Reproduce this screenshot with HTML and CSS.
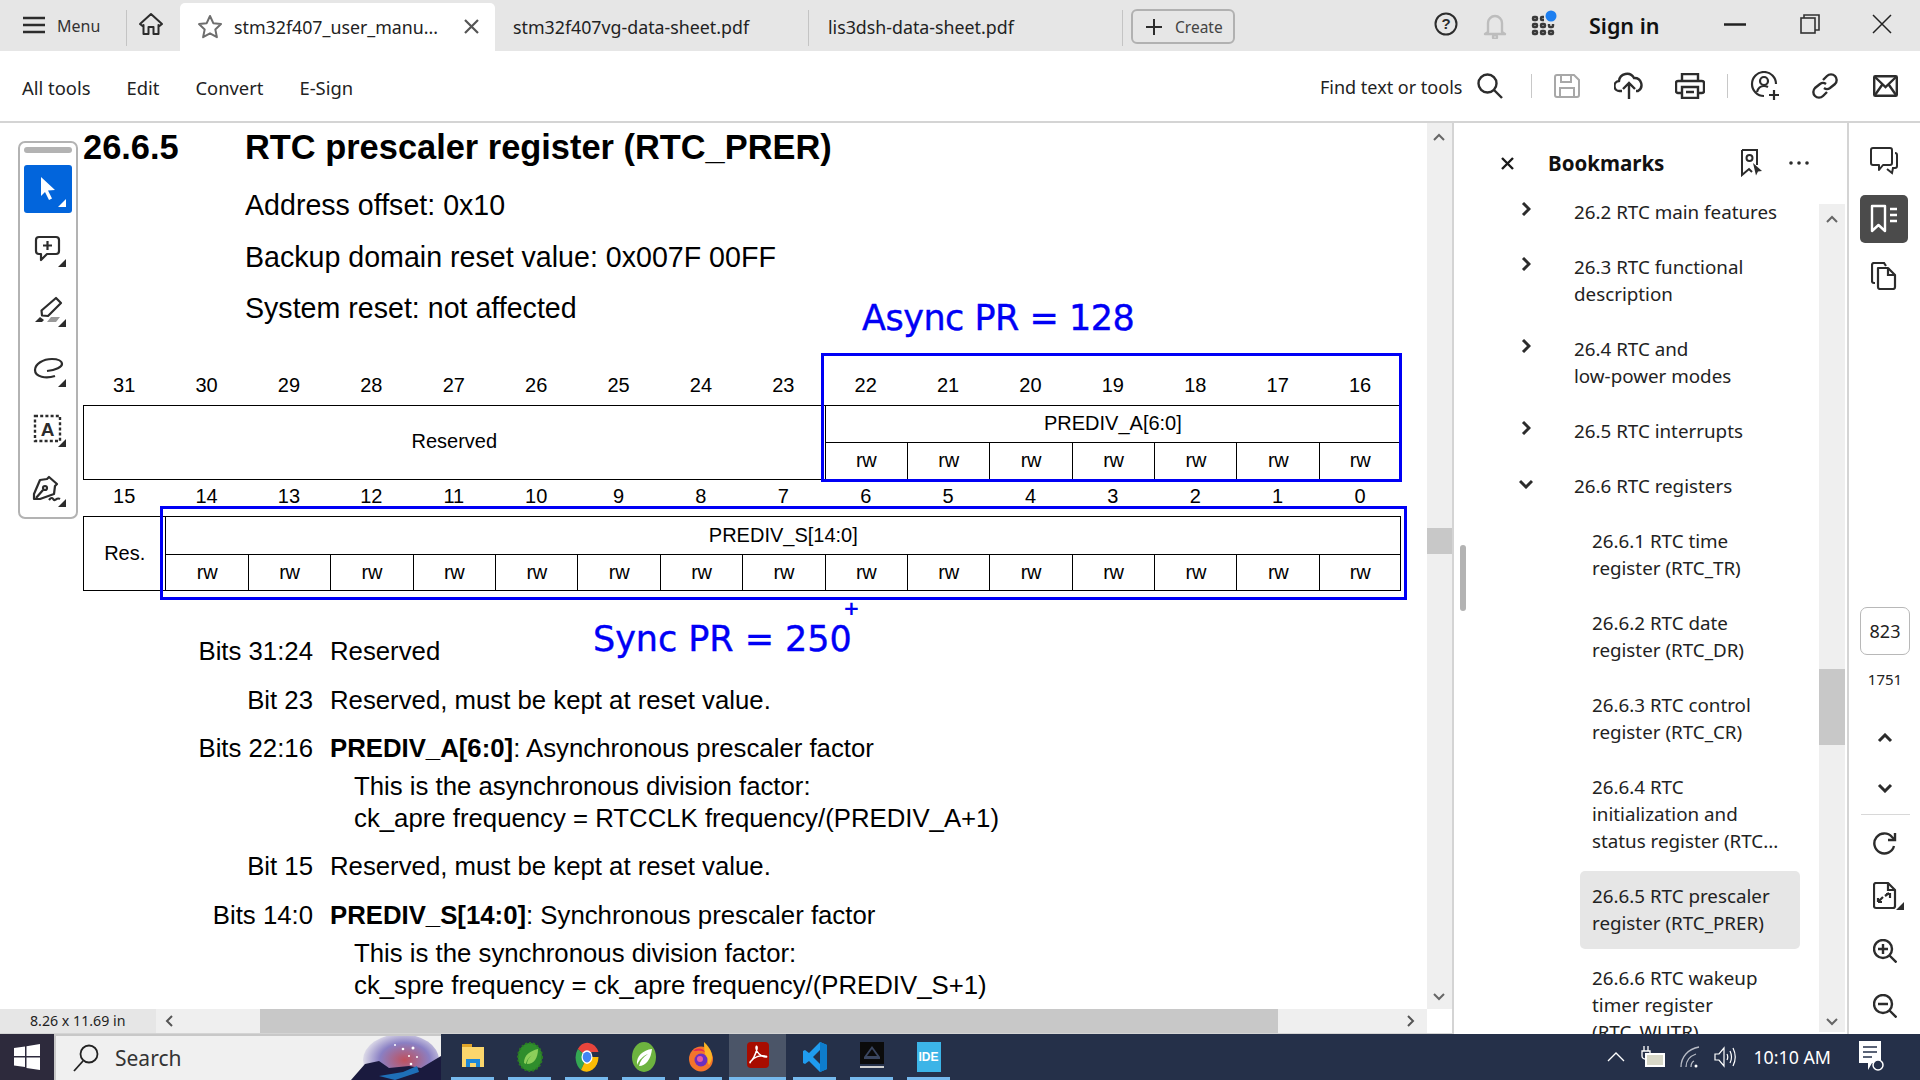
FILE: index.html
```html
<!DOCTYPE html>
<html lang="en">
<head>
<meta charset="utf-8">
<title>stm32f407_user_manual.pdf</title>
<link rel="stylesheet" href="styles.css">
</head>
<body>
<header class="tabbar">
  <div class="menu-btn">
    <svg class="ico" width="22" height="20" viewBox="0 0 22 20"><path d="M0 3h22M0 10h22M0 17h22" stroke="#2c2c2c" stroke-width="2.4"/></svg>
    <span>Menu</span>
  </div>
  <div class="home-btn">
    <svg width="26" height="26" viewBox="0 0 26 26" fill="none" stroke="#2c2c2c" stroke-width="2"><path d="M2 13L13 3l11 10-2.5 2-1-1v9h-5v-7h-5v7h-5v-9l-1 1z" stroke-linejoin="round"/></svg>
  </div>
  <div class="tab tab-active">
    <svg width="26" height="26" viewBox="0 0 26 26" fill="none" stroke="#6e6e6e" stroke-width="2"><path d="M13 2l3.3 7.2 7.7.9-5.7 5.3 1.6 7.8-6.9-3.9-6.9 3.9 1.6-7.8L2 10.100l7.700-.9z" stroke-linejoin="round"/></svg>
    <span class="tab-name">stm32f407_user_manu...</span>
    <svg class="tab-x" width="15" height="15" viewBox="0 0 15 15"><path d="M1 1l13 13M14 1L1 14" stroke="#555" stroke-width="2.200"/></svg>
  </div>
  <div class="tab tab-second">stm32f407vg-data-sheet.pdf</div>
  <div class="tab tab-third">lis3dsh-data-sheet.pdf</div>
  <div class="create-wrap">
    <div class="create-btn">
      <svg width="16" height="16" viewBox="0 0 16 16"><path d="M8 0v16M0 8h16" stroke="#2c2c2c" stroke-width="2"/></svg>
      <span>Create</span>
    </div>
  </div>
  <div class="top-right">
    <svg width="24" height="24" viewBox="0 0 24 24" fill="none" stroke="#2c2c2c" stroke-width="2"><circle cx="12" cy="12" r="10.500"/><text x="12" y="17" text-anchor="middle" class="q-mark">?</text></svg>
    <svg class="bell" width="24" height="26" viewBox="0 0 24 26" fill="none" stroke="#bdbdbd" stroke-width="2.400"><path d="M5 19V10a7 7 0 0 1 14 0v9l3 2H2z" stroke-linejoin="round"/><circle cx="12" cy="24" r="2"/></svg>
    <svg class="apps" width="27" height="26" viewBox="0 0 27 26"><g fill="none" stroke="#3a3a3a" stroke-width="2.400"><rect x="2" y="7" width="4" height="3" rx="1"/><path d="M13 7h-2a1 1 0 0 0-1 1v1a1 1 0 0 0 1 1h2"/><rect x="2" y="14" width="4" height="3" rx="1"/><rect x="10" y="14" width="4" height="3" rx="1"/><path d="M18 14v2a1 1 0 0 0 1 1h2a1 1 0 0 0 1-1v-2"/><rect x="2" y="21" width="4" height="3" rx="1"/><rect x="10" y="21" width="4" height="3" rx="1"/><rect x="18" y="21" width="4" height="3" rx="1"/></g><circle cx="20" cy="6" r="5.500" fill="#1e7ff0"/></svg>
    <span class="sign-in">Sign in</span>
    <svg class="win-min" width="22" height="3" viewBox="0 0 22 3"><path d="M0 1.500h22" stroke="#222" stroke-width="2.500"/></svg>
    <svg class="win-max" width="20" height="20" viewBox="0 0 20 20" fill="none" stroke="#333" stroke-width="1.600"><rect x="1" y="4" width="14" height="15"/><path d="M4 4V1h15v15h-4"/></svg>
    <svg class="win-close" width="20" height="20" viewBox="0 0 20 20"><path d="M1 1l18 18M19 1L1 19" stroke="#222" stroke-width="1.500"/></svg>
  </div>
</header>

<nav class="toolbar">
  <div class="tool-links"><span>All tools</span><span>Edit</span><span>Convert</span><span>E-Sign</span></div>
  <div class="tool-actions">
    <span class="find">Find text or tools</span>
    <svg class="a-search" width="26" height="26" viewBox="0 0 26 26" fill="none" stroke="#2c2c2c" stroke-width="2.400"><circle cx="10.500" cy="10.500" r="9"/><path d="M17 17l8 8"/></svg>
    <i class="vsep a-sep1"></i>
    <svg class="a-save" width="26" height="24" viewBox="0 0 26 24" fill="none" stroke="#a8a8a8" stroke-width="2"><path d="M3 1h17l5 5v15a2 2 0 0 1-2 2H3a2 2 0 0 1-2-2V3a2 2 0 0 1 2-2z"/><path d="M7 1v7h10V1M6 23v-9h14v9"/></svg>
    <svg class="a-cloud" width="30" height="28" viewBox="0 0 30 28" fill="none" stroke="#2c2c2c" stroke-width="2.400"><path d="M8 19H6a5 5 0 0 1-1-10 8 8 0 0 1 15-3 7 7 0 0 1 4 13h-2"/><path d="M15 27V11M9 17l6-6 6 6"/></svg>
    <svg class="a-print" width="30" height="26" viewBox="0 0 30 26" fill="none" stroke="#2c2c2c" stroke-width="2.400"><path d="M7 8V1h16v7M7 20H3a2 2 0 0 1-2-2v-8a2 2 0 0 1 2-2h24a2 2 0 0 1 2 2v8a2 2 0 0 1-2 2h-4"/><path d="M7 14h16v11H7zM11 19h8"/></svg>
    <i class="vsep a-sep2"></i>
    <svg class="a-share" width="30" height="30" viewBox="0 0 30 30" fill="none" stroke="#2c2c2c" stroke-width="2.200"><path d="M14 25A12 12 0 1 1 26 13M24 19v10M19 24h10"/><circle cx="14" cy="10" r="4"/><path d="M7 21c1-4 4-6 7-6 2 0 3 .5 4 1"/></svg>
    <svg class="a-link" width="26" height="26" viewBox="0 0 26 26" fill="none" stroke="#2c2c2c" stroke-width="2.400"><path d="M11 7l4-4a5 5 0 0 1 8 8l-5 4a5 5 0 0 1-6 0"/><path d="M15 19l-4 4a5 5 0 0 1-8-8l5-4a5 5 0 0 1 6 0"/></svg>
    <svg class="a-mail" width="25" height="22" viewBox="0 0 25 22" fill="none" stroke="#2c2c2c" stroke-width="2.400"><rect x="1.200" y="1.200" width="22.600" height="19.600" rx="1"/><path d="M2 2l10.500 10L23 2M2 20l7-10M23 20l-7-10"/></svg>
  </div>
</nav>

<main class="workspace">
  <section class="viewer">
    <div class="doc-area">
      <article class="page">
        <h1 class="title"><span class="title-no">26.6.5</span><span>RTC prescaler register (RTC_PRER)</span></h1>
        <div class="meta">
          <p>Address offset: 0x10</p>
          <p>Backup domain reset value: 0x007F 00FF</p>
          <p>System reset: not affected</p>
        </div>

        <div class="reg">
          <div class="no">31</div><div class="no">30</div><div class="no">29</div><div class="no">28</div><div class="no">27</div><div class="no">26</div><div class="no">25</div><div class="no">24</div><div class="no">23</div><div class="no">22</div><div class="no">21</div><div class="no">20</div><div class="no">19</div><div class="no">18</div><div class="no">17</div><div class="no">16</div>
          <div class="cell res-wide">Reserved</div>
          <div class="cell span7 end">PREDIV_A[6:0]</div>
          <div class="cell low">rw</div><div class="cell low">rw</div><div class="cell low">rw</div><div class="cell low">rw</div><div class="cell low">rw</div><div class="cell low">rw</div><div class="cell low end">rw</div>
          <div class="no">15</div><div class="no">14</div><div class="no">13</div><div class="no">12</div><div class="no">11</div><div class="no">10</div><div class="no">9</div><div class="no">8</div><div class="no">7</div><div class="no">6</div><div class="no">5</div><div class="no">4</div><div class="no">3</div><div class="no">2</div><div class="no">1</div><div class="no">0</div>
          <div class="cell res-one">Res.</div>
          <div class="cell span15 end">PREDIV_S[14:0]</div>
          <div class="cell low">rw</div><div class="cell low">rw</div><div class="cell low">rw</div><div class="cell low">rw</div><div class="cell low">rw</div><div class="cell low">rw</div><div class="cell low">rw</div><div class="cell low">rw</div><div class="cell low">rw</div><div class="cell low">rw</div><div class="cell low">rw</div><div class="cell low">rw</div><div class="cell low">rw</div><div class="cell low">rw</div><div class="cell low end">rw</div>
        </div>

        <div class="bits">
          <div class="bit b1"><span class="lab">Bits 31:24</span><span>Reserved</span></div>
          <div class="bit b2"><span class="lab">Bit 23</span><span>Reserved, must be kept at reset value.</span></div>
          <div class="bit b3"><span class="lab">Bits 22:16</span><span><b>PREDIV_A[6:0]</b>: Asynchronous prescaler factor</span></div>
          <p class="sub">This is the asynchronous division factor:<br>ck_apre frequency = RTCCLK frequency/(PREDIV_A+1)</p>
          <div class="bit b3"><span class="lab">Bit 15</span><span>Reserved, must be kept at reset value.</span></div>
          <div class="bit b2"><span class="lab">Bits 14:0</span><span><b>PREDIV_S[14:0]</b>: Synchronous prescaler factor</span></div>
          <p class="sub">This is the synchronous division factor:<br>ck_spre frequency = ck_apre frequency/(PREDIV_S+1)</p>
        </div>

        <div class="mark mark-a"></div>
        <div class="mark mark-s"></div>
        <div class="note note-a">Async PR = 128</div>
        <div class="note note-s">Sync PR = 250</div>
        <div class="note-plus">+</div>

        <aside class="quick">
          <i class="grip"></i>
          <div class="q-cell q-on"><svg width="48" height="48" viewBox="0 0 48 48"><path d="M17 12l14 13-7 .5 4 8-3 1.500-4-8-4 4z" fill="#fff"/><path d="M42 34v8h-8z" fill="#fff"/></svg></div>
          <div class="q-cell"><svg width="48" height="48" viewBox="0 0 48 48" fill="none" stroke="#2c2c2c" stroke-width="2.200"><path d="M15 12h17a3 3 0 0 1 3 3v11a3 3 0 0 1-3 3h-9l-6 6v-6h-2a3 3 0 0 1-3-3V15a3 3 0 0 1 3-3z" stroke-linejoin="round"/><path d="M23.500 16v9M19 20.500h9"/><path d="M42 34v8h-8z" fill="#2c2c2c" stroke="none"/></svg></div>
          <div class="q-cell"><svg width="48" height="48" viewBox="0 0 48 48" fill="none" stroke="#2c2c2c" stroke-width="2.200"><path d="M32 13l5 5-13 13-6-.5-.5-5z" stroke-linejoin="round"/><path d="M11 37l5-5 4 3-2 2z" fill="#2c2c2c" stroke="none"/><path d="M23 37l4-5h9l-4 5z" fill="#999" stroke="none"/><path d="M42 34v8h-8z" fill="#2c2c2c" stroke="none"/></svg></div>
          <div class="q-cell"><svg width="48" height="48" viewBox="0 0 48 48" fill="none" stroke="#2c2c2c" stroke-width="2.200"><path d="M31 31c-9 3-20 1-20-6 0-6 8-11 17-11 6 0 10 2 10 5s-6 6-15 7"/><path d="M42 34v8h-8z" fill="#2c2c2c" stroke="none"/></svg></div>
          <div class="q-cell"><svg width="48" height="48" viewBox="0 0 48 48" fill="none" stroke="#2c2c2c"><rect x="11" y="11" width="25" height="25" stroke-width="2.400" stroke-dasharray="3 2.200"/><text x="23.500" y="31" text-anchor="middle" class="q-a">A</text><path d="M42 34v8h-8z" fill="#2c2c2c" stroke="none"/></svg></div>
          <div class="q-cell"><svg width="48" height="48" viewBox="0 0 48 48" fill="none" stroke="#2c2c2c" stroke-width="2.200"><path d="M25 12l8 7-2 2-1 8-14 5-6 0 0-5 6-14 7-1z" stroke-linejoin="round"/><path d="M12 33l7-8"/><circle cx="21" cy="23" r="2"/><path d="M25 35c3-4 4-1 5 0s3-3 6-1"/><path d="M42 34v8h-8z" fill="#2c2c2c" stroke="none"/></svg></div>
        </aside>
      </article>
      <div class="vscroll">
        <svg class="arr" width="14" height="10" viewBox="0 0 14 10" fill="none" stroke="#666" stroke-width="2"><path d="M2 8l5-5 5 5"/></svg>
        <i class="thumb-v"></i>
        <svg class="arr arr-down" width="14" height="10" viewBox="0 0 14 10" fill="none" stroke="#666" stroke-width="2"><path d="M2 2l5 5 5-5"/></svg>
      </div>
    </div>
    <div class="hbar">
      <span class="size">8.26 x 11.69 in</span>
      <div class="htrack">
        <svg class="h-left" width="10" height="14" viewBox="0 0 10 14" fill="none" stroke="#555" stroke-width="2"><path d="M8 2L3 7l5 5"/></svg>
        <i class="thumb-h"></i>
        <svg class="h-right" width="10" height="14" viewBox="0 0 10 14" fill="none" stroke="#555" stroke-width="2"><path d="M2 2l5 5-5 5"/></svg>
      </div>
    </div>
  </section>

  <section class="bookmarks">
    <i class="splitter"></i>
    <div class="bm-head">
      <svg class="bm-x" width="13" height="13" viewBox="0 0 13 13"><path d="M1 1l11 11M12 1L1 12" stroke="#1a1a1a" stroke-width="2.400"/></svg>
      <span class="bm-title">Bookmarks</span>
      <svg class="bm-add" width="24" height="28" viewBox="0 0 24 28" fill="none" stroke="#2c2c2c" stroke-width="2"><path d="M3 1h15v15M3 1v25l7-6 3 3"/><circle cx="10.500" cy="9" r="3"/><path d="M14 14l9 8-4 .5-2 4z" fill="#2c2c2c" stroke="none"/></svg>
      <svg class="bm-more" width="20" height="4" viewBox="0 0 20 4" fill="#2c2c2c"><circle cx="2" cy="2" r="1.800"/><circle cx="10" cy="2" r="1.800"/><circle cx="18" cy="2" r="1.800"/></svg>
    </div>
    <div class="bm-body">
      <ul class="bm-list">
        <li class="bm-row"><svg class="chev" width="10" height="14" viewBox="0 0 10 14" fill="none" stroke="#2c2c2c" stroke-width="3"><path d="M2 1l6 6-6 6"/></svg><span>26.2 RTC main features</span></li>
        <li class="bm-row"><svg class="chev" width="10" height="14" viewBox="0 0 10 14" fill="none" stroke="#2c2c2c" stroke-width="3"><path d="M2 1l6 6-6 6"/></svg><span>26.3 RTC functional<br>description</span></li>
        <li class="bm-row"><svg class="chev" width="10" height="14" viewBox="0 0 10 14" fill="none" stroke="#2c2c2c" stroke-width="3"><path d="M2 1l6 6-6 6"/></svg><span>26.4 RTC and<br>low-power modes</span></li>
        <li class="bm-row"><svg class="chev" width="10" height="14" viewBox="0 0 10 14" fill="none" stroke="#2c2c2c" stroke-width="3"><path d="M2 1l6 6-6 6"/></svg><span>26.5 RTC interrupts</span></li>
        <li class="bm-row"><svg class="chev chev-open" width="14" height="10" viewBox="0 0 14 10" fill="none" stroke="#2c2c2c" stroke-width="3"><path d="M1 2l6 6 6-6"/></svg><span>26.6 RTC registers</span></li>
        <li class="bm-sub">26.6.1 RTC time<br>register (RTC_TR)</li>
        <li class="bm-sub">26.6.2 RTC date<br>register (RTC_DR)</li>
        <li class="bm-sub">26.6.3 RTC control<br>register (RTC_CR)</li>
        <li class="bm-sub">26.6.4 RTC<br>initialization and<br>status register (RTC...</li>
        <li class="bm-sub bm-sel">26.6.5 RTC prescaler<br>register (RTC_PRER)</li>
        <li class="bm-sub">26.6.6 RTC wakeup<br>timer register<br>(RTC_WUTR)</li>
      </ul>
      <div class="bm-scroll">
        <svg class="arr" width="14" height="10" viewBox="0 0 14 10" fill="none" stroke="#666" stroke-width="2"><path d="M2 8l5-5 5 5"/></svg>
        <i class="thumb-b"></i>
        <svg class="arr arr-down" width="14" height="10" viewBox="0 0 14 10" fill="none" stroke="#666" stroke-width="2"><path d="M2 2l5 5 5-5"/></svg>
      </div>
    </div>
  </section>

  <aside class="rail">
    <svg class="r-comment" width="28" height="28" viewBox="0 0 28 28" fill="none" stroke="#2c2c2c" stroke-width="2"><path d="M3 1h17a2 2 0 0 1 2 2v13a2 2 0 0 1-2 2h-7l-4 5v-5H3a2 2 0 0 1-2-2V3a2 2 0 0 1 2-2z" stroke-linejoin="round"/><path d="M25 6c1 0 2 1 2 2v11c0 1-1 2-2 2h-2l-1 5-5-4"/></svg>
    <div class="r-active"><svg width="30" height="30" viewBox="0 0 30 30" fill="none" stroke="#fff" stroke-width="2.400"><path d="M3 2h13v25l-6.500-6L3 27z" stroke-linejoin="round"/><path d="M21 5h7M21 11h7M21 17h7"/></svg></div>
    <svg class="r-pages" width="26" height="28" viewBox="0 0 26 28" fill="none" stroke="#2c2c2c" stroke-width="2.200"><path d="M4 21H3a2 2 0 0 1-2-2V3a2 2 0 0 1 2-2h10l2 3"/><path d="M7 6h10l7 7v12a2 2 0 0 1-2 2H9a2 2 0 0 1-2-2z" stroke-linejoin="round"/><path d="M17 6v7h7"/></svg>
    <div class="page-box">823</div>
    <div class="page-total">1751</div>
    <svg class="r-up" width="16" height="10" viewBox="0 0 16 10" fill="none" stroke="#2c2c2c" stroke-width="3"><path d="M2 8l6-6 6 6"/></svg>
    <svg class="r-down" width="16" height="10" viewBox="0 0 16 10" fill="none" stroke="#2c2c2c" stroke-width="3"><path d="M2 2l6 6 6-6"/></svg>
    <i class="r-sep"></i>
    <svg class="r-rot" width="24" height="24" viewBox="0 0 24 24" fill="none" stroke="#2c2c2c" stroke-width="2.400"><path d="M21 14a10 10 0 1 1-2-9l3 3"/><path d="M22 1v7h-7"/></svg>
    <svg class="r-fit" width="32" height="28" viewBox="0 0 32 28" fill="none" stroke="#2c2c2c" stroke-width="2.200"><path d="M3 1h12l7 7v16a2 2 0 0 1-2 2H3a2 2 0 0 1-2-2V3a2 2 0 0 1 2-2z" stroke-linejoin="round"/><path d="M15 1v7h7M13 12h4v4M5 20h4M5 20v-4M10 15l-4 4M12 14l4-3"/><path d="M31 20v8h-8z" fill="#2c2c2c" stroke="none"/></svg>
    <svg class="r-zin" width="24" height="24" viewBox="0 0 24 24" fill="none" stroke="#2c2c2c" stroke-width="2.400"><circle cx="10" cy="10" r="9"/><path d="M16.500 16.500l7 7M10 5v10M5 10h10"/></svg>
    <svg class="r-zout" width="24" height="24" viewBox="0 0 24 24" fill="none" stroke="#2c2c2c" stroke-width="2.400"><circle cx="10" cy="10" r="9"/><path d="M16.500 16.500l7 7M5 10h10"/></svg>
  </aside>
</main>

<footer class="taskbar">
  <div class="start"><svg width="26" height="26" viewBox="0 0 26 26" fill="#fff"><path d="M0 4l11-1.500V12H0zM12.500 2.300L26 0v12H12.500zM0 13.500h11V23L0 21.500zM12.500 13.500H26V26l-13.500-2z"/></svg></div>
  <div class="search">
    <svg width="26" height="28" viewBox="0 0 26 28" fill="none" stroke="#222" stroke-width="1.800"><circle cx="16" cy="10" r="8.500"/><path d="M10 17L1 27"/></svg>
    <span>Search</span>
    <svg class="search-art" width="90" height="44" viewBox="0 0 90 44"><defs><radialGradient id="glow" cx="55%" cy="50%" r="60%"><stop offset="0" stop-color="#c0505c"/><stop offset=".55" stop-color="#8a80c4"/><stop offset="1" stop-color="#f0f0f0"/></radialGradient></defs><rect width="90" height="44" fill="#f0f0f0"/><ellipse cx="50" cy="24" rx="38" ry="26" fill="url(#glow)"/><path d="M0 44l14-16 14-3 10 7 20-2 12 2 20-12v24z" fill="#1a1a3e"/><path d="M28 40l24-4 14-6 2 6-24 8z" fill="#1e6fb8"/><g fill="#fff"><circle cx="44" cy="9" r="1"/><circle cx="52" cy="13" r="1.300"/><circle cx="62" cy="12" r="1.500"/><circle cx="58" cy="20" r="1"/><circle cx="66" cy="21" r="1"/><circle cx="60" cy="28" r="1.300"/></g></svg>
  </div>
  <div class="apps-row">
    <div class="app"><svg width="24" height="27" viewBox="0 0 24 27"><path d="M1 2h10v5H1z" fill="#e0a52a"/><path d="M1 5h22v20H1z" fill="#fbd66c"/><path d="M5 17h14v8h-4v-4H9v4H5z" fill="#1e88d8"/></svg><i class="run"></i></div>
    <div class="app"><svg width="26" height="30" viewBox="0 0 26 30"><ellipse cx="13" cy="15" rx="12" ry="14" fill="#2f8e2c" stroke="#2a7a24" stroke-width="2" stroke-dasharray="2 2"/><path d="M7 21c0-8 6-12 14-14 0 9-4 15-11 15 0-4 3-8 7-10-4 2-7 5-8 10z" fill="#8ccf5a"/></svg><i class="run"></i></div>
    <div class="app"><svg width="24" height="30" viewBox="0 0 24 30"><g transform="scale(1 1.250)"><path d="M12 12L2.800 5.500A12 12 0 0 1 23.500 8H12z" fill="#e8453c"/><path d="M12 12L6 22.400A12 12 0 0 1 2.800 5.500z" fill="#34a853"/><path d="M12 12h11.500A12 12 0 0 1 6 22.400z" fill="#fbbc05"/><circle cx="12" cy="12" r="5.500" fill="#fff"/><circle cx="12" cy="12" r="4.300" fill="#4285f4"/></g></svg><i class="run"></i></div>
    <div class="app"><svg width="24" height="30" viewBox="0 0 24 30"><ellipse cx="12" cy="15" rx="12" ry="15" fill="#6db33f"/><path d="M5 23c-1-9 6-15 15-16-1 10-6 17-13 17 1-5 4-9 9-12-5 2-9 6-11 11z" fill="#fff"/></svg><i class="run"></i></div>
    <div class="app"><svg width="24" height="30" viewBox="0 0 24 30"><ellipse cx="12" cy="17" rx="12" ry="12.500" fill="#f3742b"/><path d="M15 0c4 4 8 8 8 15 0 3-1 5-3 8-3-6-5-12-5-23z" fill="#fcb424"/><path d="M4 9c4-4 10-3 12 1-4-2-7-1-12-1z" fill="#e62a55"/><circle cx="12" cy="18" r="6.500" fill="#6b2fc0"/><circle cx="11" cy="17" r="3" fill="#e85aa0"/></svg><i class="run"></i></div>
    <div class="app app-on"><svg width="22" height="26" viewBox="0 0 22 26"><rect width="22" height="26" rx="4" fill="#a80c00"/><path d="M3 20c3-2 5-6 7-13 .5-3-1-4-1-1 0 4 5 9 10 9 1 0 1-1-1-1-5-1-11 1-14 5-1 2-1 2-1 1z" fill="none" stroke="#fff" stroke-width="1.500"/></svg><i class="run"></i></div>
    <div class="app"><svg width="24" height="30" viewBox="0 0 24 30"><path d="M17 0l7 3v24l-7 3L6 19l-4 3-2-1v-12l2-1 4 3z" fill="#1f9cf0"/><path d="M17 8L10 15l7 7z" fill="#253049"/><path d="M17 0l7 3v24l-7 3z" fill="#0e7ccc"/></svg><i class="run"></i></div>
    <div class="app"><svg width="24" height="26" viewBox="0 0 24 26"><rect width="24" height="22" fill="#0b0b0b"/><path d="M12 4l8 11H4z" fill="#3a4660"/><path d="M12 7l5 7H7z" fill="#0b0b0b"/><path d="M4 15h16v2H4z" fill="#3a4660"/><path d="M0 24h24v2H0z" fill="#cfcfcf"/></svg><i class="run"></i></div>
    <div class="app"><span class="ide">IDE</span><i class="run"></i></div>
  </div>
  <div class="tray">
    <svg class="t-chev" width="18" height="10" viewBox="0 0 18 10" fill="none" stroke="#fff" stroke-width="1.300"><path d="M1 9l8-8 8 8"/></svg>
    <svg class="t-power" width="24" height="22" viewBox="0 0 24 22"><path d="M3 0v5M7 0v5M1 5h8v5a3 3 0 0 1-3 3H4a3 3 0 0 1-3-3z" fill="none" stroke="#fff" stroke-width="1.300"/><rect x="4" y="7" width="20" height="14" fill="#fff"/><rect x="6" y="9" width="16" height="10" fill="#d8d8c8"/></svg>
    <svg class="t-wifi" width="20" height="22" viewBox="0 0 20 22" fill="none" stroke="#b8bcc6" stroke-width="1.300"><path d="M1 21C1 11 8 3 19 1M6 21c0-6 4-11 10-13M11 21c0-3 1-5 3-6"/><circle cx="16" cy="20" r="1.500" fill="#fff" stroke="none"/></svg>
    <svg class="t-vol" width="22" height="22" viewBox="0 0 22 22" fill="none" stroke="#fff" stroke-width="1.200"><path d="M1 8h4l5-6v18l-5-6H1z"/><path d="M13 8c1 2 1 4 0 6M16 5c2 4 2 8 0 12M19 2c3 6 3 12 0 18"/></svg>
    <span class="clock">10:10 AM</span>
    <svg class="t-note" width="26" height="32" viewBox="0 0 26 32"><path d="M1 0h22v22H14l-4 7v-7H1z" fill="#fff"/><path d="M5 6h14M5 11h14M5 16h9" stroke="#253049" stroke-width="1.500"/><circle cx="20" cy="24" r="5" fill="#253049" stroke="#fff" stroke-width="1.500"/></svg>
  </div>
</footer>
</body>
</html>
```
FILE: styles.css
```css
* { box-sizing: border-box; }
html, body { margin: 0; padding: 0; height: 100%; }
body {
  width: 1920px; height: 1080px; overflow: hidden;
  display: flex; flex-direction: column;
  font-family: "Noto Sans", "Open Sans", sans-serif;
  color: #1f1f1f; background: #fff;
}
svg { display: block; flex: none; }
i { display: block; }
p, h1, ul { margin: 0; padding: 0; }
ul { list-style: none; }

/* tab strip */
.tabbar { height: 51px; background: #e6e6e6; display: flex; align-items: flex-end; flex: none; }
.menu-btn { width: 127px; height: 51px; padding: 0 0 0 23px; display: flex; align-items: center; gap: 12px; font-size: 16px; color: #333; position: relative; }
.menu-btn .ico { margin-top: -2px; }
.menu-btn::after { content: ""; position: absolute; right: 0; top: 10px; height: 36px; width: 1px; background: #c4c4c4; }
.home-btn { width: 53px; height: 51px; padding-left: 11px; padding-bottom: 3px; display: flex; align-items: center; }
.tab { height: 48px; font-size: 17.800px; display: flex; align-items: center; color: #222; }
.tab-active { width: 315px; background: #fff; border-radius: 5px 5px 0 0; padding-left: 17px; }
.tab-name { margin-left: 11px; width: 230px; white-space: nowrap; }
.tab-x { margin-top: -1px; }
.tab-second { width: 314px; padding-left: 18px; position: relative; }
.tab-third { width: 314px; padding-left: 19px; position: relative; }
.tab-second::after, .tab-third::after { content: ""; position: absolute; right: 0; top: 7px; height: 36px; width: 1px; background: #c4c4c4; }
.create-wrap { height: 51px; padding: 9px 0 7px 8px; }
.create-btn { width: 104px; height: 35px; border: 2px solid #b1b1b1; border-radius: 6px; display: flex; align-items: center; padding-left: 13px; gap: 13px; font-size: 15.500px; color: #444; }
.top-right { height: 51px; display: flex; align-items: center; padding-left: 199px; padding-bottom: 3px; }
.bell { margin-left: 25px; margin-top: 3px; }
.apps { margin-left: 24px; margin-top: -2px; }
.sign-in { margin-left: 31px; font-size: 21.500px; font-weight: 600; color: #111; white-space: nowrap; margin-top: 3px; }
.win-min { margin-left: 65px; }
.win-max { margin-left: 54px; }
.win-close { margin-left: 52px; }

/* toolbar */
.toolbar { height: 72px; border-bottom: 2px solid #d4d4d4; display: flex; align-items: center; justify-content: space-between; padding: 0 0 0 22px; flex: none; }
.tool-links { display: flex; gap: 36px; font-size: 18.400px; color: #222; padding-top: 3px; }
.tool-actions { display: flex; align-items: center; font-size: 18px; width: 600px; }
.find { white-space: nowrap; color: #222; padding-top: 2px; }
.a-search { margin-left: 15px; }
.vsep { width: 1px; height: 24px; background: #c8c8c8; }
.a-sep1 { margin-left: 28px; }
.a-save { margin-left: 22px; }
.a-cloud { margin-left: 34px; }
.a-print { margin-left: 31px; }
.a-sep2 { margin-left: 22px; }
.a-share { margin-left: 22px; }
.a-link { margin-left: 32px; }
.a-mail { margin-left: 35px; }

/* workspace */
.workspace { height: 911px; display: flex; flex: none; }
.viewer { width: 1452px; display: flex; flex-direction: column; flex: none; }
.doc-area { height: 886px; display: flex; flex: none; }
.page {
  width: 1427px; height: 886px; position: relative; overflow: hidden; flex: none;
  padding: 4px 0 0 83px;
  font-family: "Liberation Sans", Arial, sans-serif; color: #000;
}
.title { display: flex; font-size: 34.400px; line-height: 40px; font-weight: 700; }
.title-no { width: 162px; }
.meta { margin: 13px 0 0 162px; font-size: 28.600px; line-height: 51.500px; }

.reg {
  margin-top: 30px; display: grid;
  grid-template-columns: repeat(16, 82.4px);
  grid-template-rows: 40px 37px 38px 36px 38px 37px;
  font-size: 20px;
}
.no, .cell { display: flex; align-items: center; justify-content: center; }
.no { padding-top: 1px; }
.cell ~ .no { padding-top: 0; padding-bottom: 2px; }
.cell { border: solid #000; border-width: 1.500px 0 0 1.500px; }
.low { border-bottom-width: 1.500px; letter-spacing: -0.300px; }
.end { border-right-width: 1.500px; }
.res-wide { grid-column: span 9; grid-row: span 2; border-bottom-width: 1.500px; padding-bottom: 2px; }
.res-one { grid-column: span 1; grid-row: span 2; border-bottom-width: 1.500px; }
.span7 { grid-column: span 7; }
.span15 { grid-column: span 15; }

.bits { margin-top: 44px; font-size: 25.750px; line-height: 32px; white-space: nowrap; }
.bit { display: flex; gap: 17px; }
.lab { width: 230px; text-align: right; flex: none; }
.b2 { margin-top: 17px; }
.b3 { margin-top: 16px; }
.sub { margin: 6px 0 0 271px; }

.mark { position: absolute; border: 3px solid #0000f5; }
.mark-a { left: 821px; top: 230px; width: 581px; height: 129px; }
.mark-s { left: 160px; top: 383px; width: 1247px; height: 94px; }
.note { position: absolute; color: #0000f5; font-family: "DejaVu Sans", sans-serif; font-size: 35px; line-height: 44px; white-space: nowrap; -webkit-text-stroke: 0.400px #0000f5; }
.note-a { left: 862px; top: 173px; letter-spacing: -0.500px; }
.note-s { left: 593px; top: 494px; letter-spacing: -0.050px; }
.note-plus { position: absolute; left: 843px; top: 475px; color: #0000f5; font: 700 20px/20px "DejaVu Sans", sans-serif; }

.quick {
  position: absolute; left: 18px; top: 18px; width: 60px; height: 378px;
  background: #fff; border: 2px solid #b3b3b3; border-radius: 7px;
  display: flex; flex-direction: column; align-items: center; padding-top: 4px; gap: 12px;
}
.grip { width: 48px; height: 6px; background: #b3b3b3; border-radius: 3px; }
.q-cell { width: 48px; height: 48px; border-radius: 3px; }
.q-on { background: #0265dc; }
.q-mark { font: 700 15px "Liberation Sans", sans-serif; fill: #2c2c2c; stroke: none; }
.q-a { font: 700 19px "Liberation Sans", sans-serif; fill: #2c2c2c; stroke: none; }

/* scrollbars */
.vscroll { width: 25px; background: #efefef; display: flex; flex-direction: column; align-items: center; flex: none; padding: 9px 0 7px; }
.vscroll .arr { margin-right: 2px; }
.arr-down { margin-top: auto; }
.thumb-v { width: 25px; height: 26px; background: #c8c8c8; margin-top: 386px; }
.hbar { height: 25px; display: flex; border-bottom: 1px solid #d4d4d4; flex: none; }
.size { width: 156px; background: #e6e6e6; font-size: 14.200px; line-height: 24px; padding-left: 30px; white-space: nowrap; }
.htrack { width: 1271px; background: #efefef; display: flex; align-items: center; }
.h-left { margin-left: 8px; }
.thumb-h { width: 1018px; height: 24px; background: #c8c8c8; margin-left: 86px; }
.h-right { margin-left: 128px; }

/* bookmarks */
.bookmarks { width: 397px; border-left: 2px solid #d4d4d4; border-right: 2px solid #d4d4d4; display: flex; flex-direction: column; flex: none; position: relative; font-size: 18.800px; color: #222; }
.splitter { position: absolute; left: 6px; top: 422px; width: 6px; height: 66px; background: #b3b3b3; border-radius: 3px; }
.bm-head { height: 62px; padding: 18px 0 0 0; display: flex; align-items: center; flex: none; }
.bm-x { margin-left: 47px; }
.bm-title { margin-left: 34px; width: 191px; font-size: 20.500px; font-weight: 700; color: #111; }
.bm-more { margin-left: 26px; }
.bm-body { height: 849px; display: flex; flex: none; overflow: hidden; }
.bm-list { width: 365px; flex: none; line-height: 27px; white-space: nowrap; }
.bm-row { display: flex; padding: 14px 0 14px 67px; }
.chev { width: 10px; margin-top: 3px; margin-right: 43px; }
.chev-open { width: 14px; margin-top: 6px; margin-left: -2px; margin-right: 41px; }
.bm-sub { padding: 14px 0 14px 138px; }
.bm-sel { margin: 2px 19px 2px 126px; padding: 12px 0 12px 12px; background: #e6e6e6; border-radius: 5px; }
.bm-scroll { width: 26px; margin-top: 19px; margin-bottom: 2px; background: #efefef; display: flex; flex-direction: column; align-items: center; padding: 10px 0 5px; }
.thumb-b { width: 26px; height: 76px; background: #c8c8c8; margin-top: 445px; }

/* right rail */
.rail { width: 71px; display: flex; flex-direction: column; align-items: center; flex: none; font-size: 18px; color: #222; padding-left: 1px; }
.r-comment { margin-top: 24px; margin-right: 3px; }
.r-active { width: 48px; height: 48px; margin-top: 20px; margin-right: 3px; background: #4b4b4b; border-radius: 5px; display: flex; align-items: center; justify-content: center; }
.r-pages { margin-top: 19px; margin-right: 3px; }
.page-box { width: 50px; height: 48px; margin-top: 317px; border: 1.500px solid #b8b8b8; border-radius: 7px; display: flex; align-items: center; justify-content: center; }
.page-total { font-size: 15px; margin-top: 13px; line-height: 22px; }
.r-up { margin-top: 43px; }
.r-down { margin-top: 40px; }
.r-sep { width: 49px; height: 1px; background: #d8d8d8; margin-top: 21px; }
.r-rot { margin-top: 17px; }
.r-fit { margin-top: 26px; margin-left: 7px; }
.r-zin { margin-top: 29px; }
.r-zout { margin-top: 31px; }

/* taskbar */
.taskbar { height: 46px; background: #253049; display: flex; flex: none; align-items: stretch; }
.start { width: 54px; background: #2d2a3c; display: flex; align-items: center; justify-content: center; }
.search { width: 387px; background: #f0f0f0; border: 2px solid #c8c8c8; border-right: 0; border-bottom: 0; display: flex; align-items: center; padding-left: 17px; gap: 16px; font-size: 21px; color: #333; overflow: hidden; }
.search-art { margin-left: auto; }
.apps-row { display: flex; margin-left: 3px; }
.app { width: 57px; display: flex; flex-direction: column; align-items: center; justify-content: space-between; padding-top: 8px; }
.app-on { background: #4b5568; }
.run { width: 43px; height: 3px; background: #76b9ed; flex: none; }
.app-on .run { width: 57px; }
.ide { width: 24px; height: 30px; background: #3cb4e7; color: #fff; font: 700 12px/30px "Liberation Sans", sans-serif; text-align: center; }
.tray { margin-left: auto; display: flex; align-items: center; padding-right: 36px; }
.t-power { margin-left: 16px; }
.t-wifi { margin-left: 15px; }
.t-vol { margin-left: 14px; }
.clock { margin-left: 17px; color: #fff; font-size: 17.800px; white-space: nowrap; }
.t-note { margin-left: 27px; }
```
